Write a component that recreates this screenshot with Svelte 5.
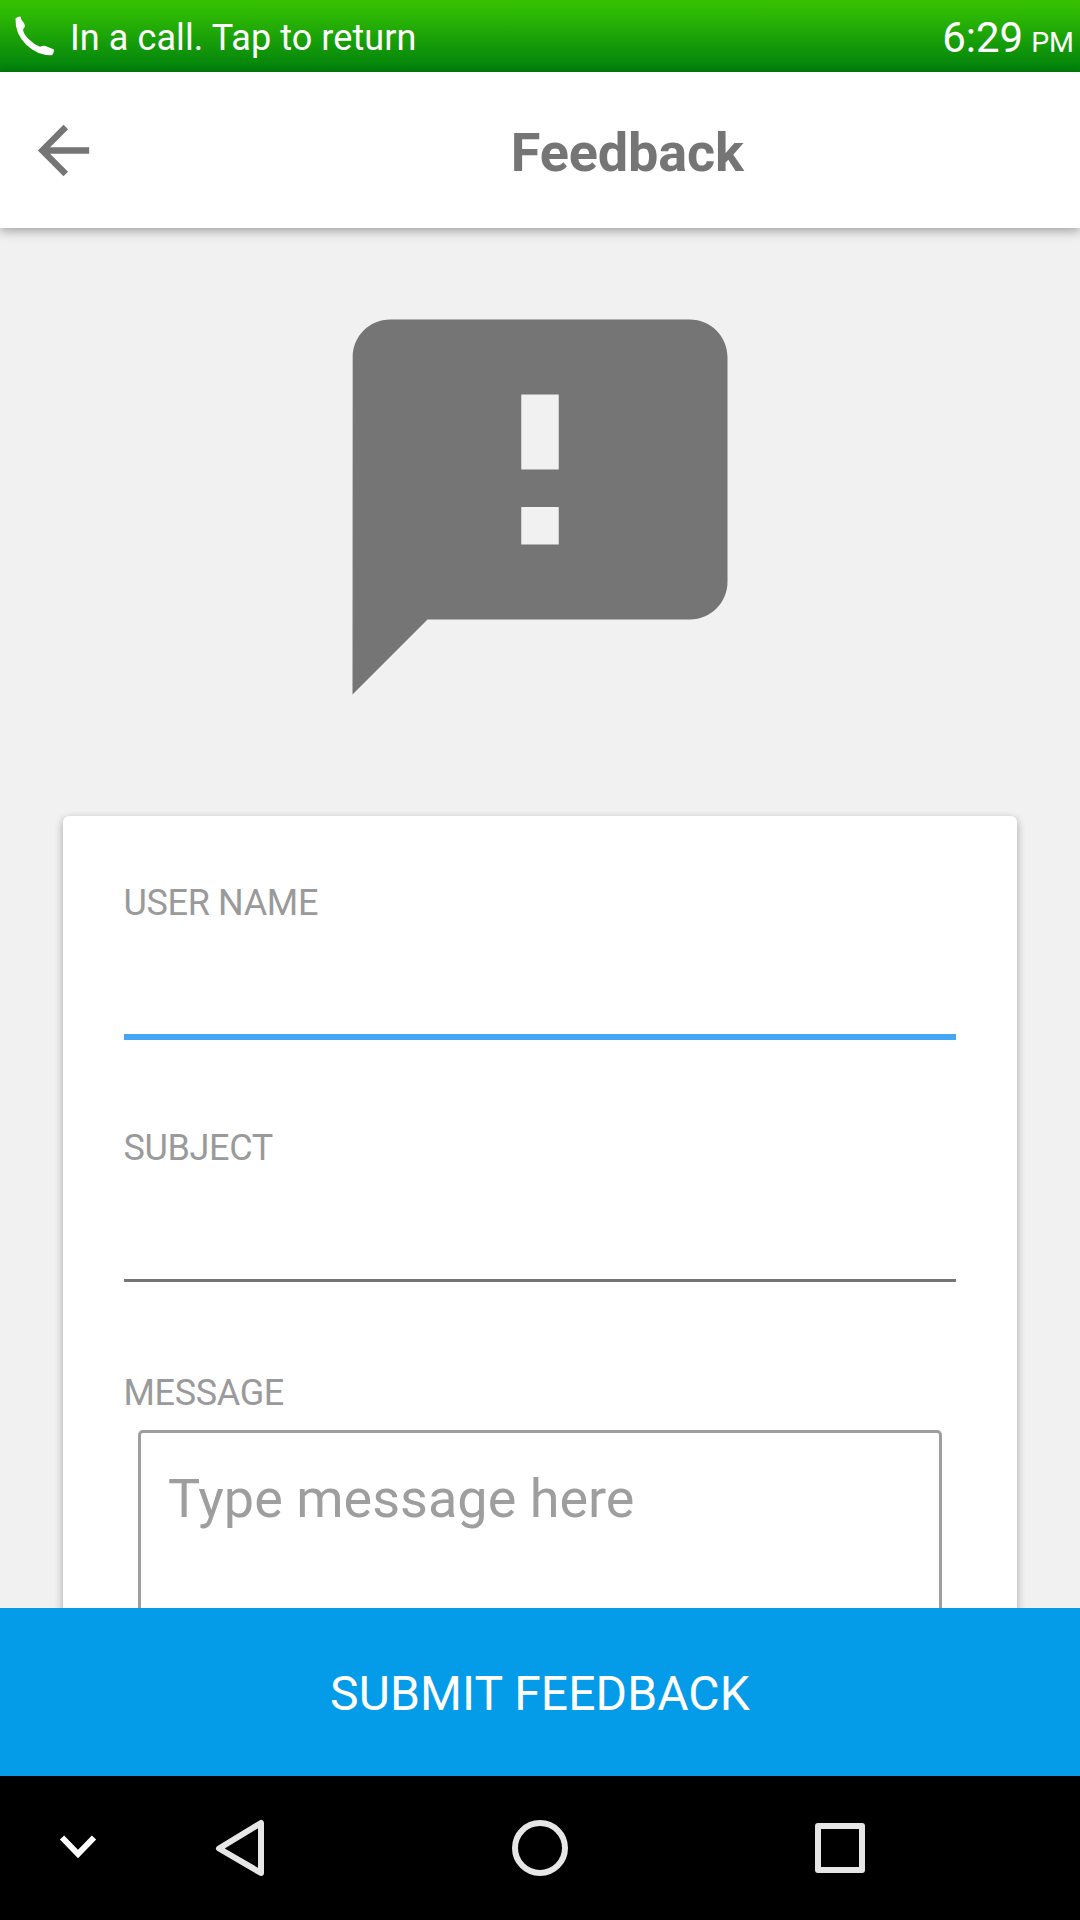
<script>
  let userName = $state('');
  let subject = $state('');
  let message = $state('');
</script>

<div class="screen">
  <div class="status">
    <svg class="phone" viewBox="0 0 72 72" aria-hidden="true">
      <path d="M15.500 18.500Q17.500 16.500 20.500 16.500L21.500 20Q25 23.500 25 26.500L23 29.500Q23.500 34 28 38.500Q34 44.500 40 46.800Q43 45 45.500 46L54 49.500Q54 53 52 55.200Q37 55.500 26 44.500Q15 33.500 15.500 18.500Z" />
    </svg>
    <span class="call">In a call. Tap to return</span>
    <span class="time">6:29<small>PM</small></span>
  </div>

  <header>
    <button class="back" aria-label="Back">
      <svg viewBox="0 0 24 24"><path d="M20 11H7.830l5.590-5.590L12 4l-8 8 8 8 1.410-1.410L7.830 13H20v-2z" /></svg>
    </button>
    <h1>Feedback</h1>
  </header>

  <main>
    <svg class="hero" viewBox="0 0 24 24" aria-hidden="true">
      <path d="M20 2H4c-1.100 0-1.990.900-1.990 2L2 22l4-4h14c1.100 0 2-.900 2-2V4c0-1.100-.900-2-2-2zm-7 12h-2v-2h2v2zm0-4h-2V6h2v4z" />
    </svg>
    <form class="card">
      <label class="field active"><span>USER NAME</span><input bind:value={userName} /></label>
      <label class="field"><span>SUBJECT</span><input bind:value={subject} /></label>
      <label class="field message"><span>MESSAGE</span><textarea placeholder="Type message here" bind:value={message}></textarea></label>
    </form>
  </main>

  <button class="submit">SUBMIT FEEDBACK</button>

  <nav>
    <svg viewBox="0 0 1080 144" aria-hidden="true">
      <path d="M62 61.500l16 16.500 16-16.500" fill="none" stroke="#fff" stroke-width="6" />
      <g fill="none" stroke="#e6e6e6" stroke-width="6" stroke-linejoin="round">
        <path d="M261 47v50L219 72.500z" />
        <circle cx="540" cy="72" r="25" />
        <rect x="818" y="50" width="44" height="44" />
      </g>
    </svg>
  </nav>
</div>

<style>
  :global(body) { margin: 0; }
  .screen {
    width: 1080px;
    height: 1920px;
    display: flex;
    flex-direction: column;
    overflow: hidden;
    background: #f1f1f1;
    font-family: Roboto, sans-serif;
  }
  button { border: 0; padding: 0; background: none; font-family: inherit; }
  .status {
    height: 72px;
    flex: none;
    display: flex;
    align-items: flex-start;
    box-sizing: border-box;
    padding-right: 6px;
    color: #fff;
    background: linear-gradient(#36c200, #2db804 20%, #00800d);
  }
  .phone { width: 72px; height: 72px; margin-right: -2px; flex: none; fill: #fff; }
  .call { font-size: 36px; line-height: 76px; letter-spacing: .08px; }
  .time { margin-left: auto; font-size: 42px; line-height: 76px; }
  small { font-size: 28.500px; margin-left: 8px; }
  header {
    height: 156px;
    flex: none;
    display: flex;
    align-items: center;
    background: #fff;
    box-shadow: 0 3px 10px rgba(0, 0, 0, .34);
    z-index: 1;
  }
  .back { width: 77px; height: 77px; margin-left: 24.500px; flex: none; }
  .back svg { display: block; width: 77px; height: 77px; fill: #757575; }
  h1 { flex: 1; margin: 6px 0 0 73px; text-align: center; font-size: 54px; font-weight: 700; line-height: 64px; letter-spacing: -.12px; color: #757575; }
  main {
    flex: 1;
    min-height: 0;
    overflow: hidden;
    display: flex;
    flex-direction: column;
    align-items: center;
  }
  .hero { width: 450px; height: 450px; margin: 54px 0 84px; flex: none; fill: #757575; }
  .card {
    width: 954px;
    height: 900px;
    flex: none;
    box-sizing: border-box;
    padding: 66px 61px 0;
    border-radius: 6px;
    background: #fff;
    box-shadow: 0 3px 9px rgba(0, 0, 0, .33);
  }
  .field { display: flex; flex-direction: column; height: 245px; }
  .field span { margin-left: -.500px; font-size: 36px; line-height: 42px; letter-spacing: -.350px; color: #9a9a9a; }
  input {
    height: 110px;
    margin-top: 3px;
    box-sizing: border-box;
    padding: 0 0 8px;
    border: 0;
    border-bottom: 3px solid #757575;
    outline: 0;
    font: 54px Roboto, sans-serif;
    color: #424242;
  }
  .active input { height: 113px; border-bottom: 6px solid #45a6f5; }
  .message textarea {
    width: 804px;
    height: 300px;
    box-sizing: border-box;
    margin: 16px 0 0 14px;
    padding: 34px 27px;
    border: 3px solid #9e9e9e;
    border-radius: 5px;
    resize: none;
    outline: 0;
    font: 54px/64px Roboto, sans-serif;
    color: #424242;
  }
  textarea::placeholder { color: #9e9e9e; opacity: 1; }
  .submit { height: 168px; flex: none; background: #049be8; color: #fff; font-size: 48px; line-height: 56px; letter-spacing: .1px; padding-top: 4px; }
  nav { height: 144px; flex: none; background: #000; }
  nav svg { display: block; width: 1080px; height: 144px; }
</style>
